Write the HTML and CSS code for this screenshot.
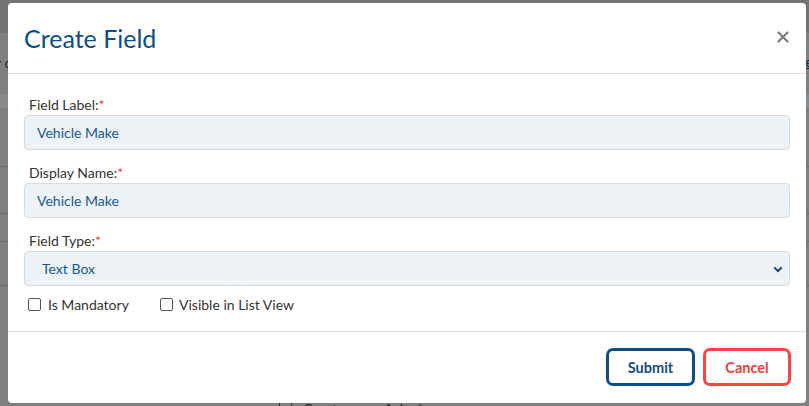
FILE: index.html
```html
<!DOCTYPE html>
<html lang="en">
<head>
<meta charset="utf-8">
<title>Create Field</title>
<link rel="stylesheet" href="styles.css">
</head>
<body>
<div class="backdrop">
  <div class="bg-top"></div>
  <div class="bg-link-left">r c</div>
  <div class="bg-link-right">e</div>
  <div class="bg-band"></div>
  <div class="bg-line l1"></div>
  <div class="bg-line l2"></div>
  <div class="bg-line l3"></div>
  <div class="bg-line l4"></div>
  <div class="bg-bottom"><span class="bg-sep"></span><span class="bg-sep"></span><span class="bg-text">Customer Admin</span></div>
</div>
<div class="modal">
  <div class="modal-header">
    <h1 class="modal-title">Create Field</h1>
    <button class="close" type="button" aria-label="Close">
      <svg width="12" height="12" viewBox="0 0 12 12"><path d="M1.5 1.5L10.5 10.5M10.5 1.5L1.5 10.5" stroke="#7a7a7a" stroke-width="2.2" stroke-linecap="round"/></svg>
    </button>
  </div>
  <div class="modal-body">
    <div class="field">
      <label class="label">Field Label:<span class="req">*</span></label>
      <div class="input">Vehicle Make</div>
    </div>
    <div class="field">
      <label class="label">Display Name:<span class="req">*</span></label>
      <div class="input">Vehicle Make</div>
    </div>
    <div class="field field-last">
      <label class="label">Field Type:<span class="req">*</span></label>
      <div class="input select"><span>Text Box</span>
        <svg width="10" height="7" viewBox="0 0 10 7"><path d="M1.3 1.4L5 5.1L8.7 1.4" fill="none" stroke="#1a3f66" stroke-width="2"/></svg>
      </div>
    </div>
    <div class="checks">
      <label class="check"><span class="box"></span>Is Mandatory</label>
      <label class="check"><span class="box"></span>Visible in List View</label>
    </div>
  </div>
  <div class="modal-footer">
    <button class="btn btn-submit" type="button">Submit</button>
    <button class="btn btn-cancel" type="button">Cancel</button>
  </div>
</div>
</body>
</html>
```

FILE: styles.css
```css
* { box-sizing: border-box; }
html, body { margin: 0; padding: 0; }
body {
  width: 809px;
  height: 406px;
  overflow: hidden;
  background: #7f7f7f;
  font-family: Lato, "Open Sans", sans-serif;
  position: relative;
}
.backdrop { position: absolute; inset: 0; }
.bg-top { position: absolute; left: 0; top: 0; width: 809px; height: 33px; background: #737373; }
.bg-band { position: absolute; left: 0; top: 94px; width: 809px; height: 14px; background: #878a8d; }
.bg-line { position: absolute; left: 0; width: 809px; height: 1px; background: #6c6c6c; }
.l1 { top: 166px; } .l2 { top: 213px; } .l3 { top: 241px; } .l4 { top: 285px; }
.bg-link-left { position: absolute; left: -4px; top: 54px; font-size: 14px; color: #0a2a48; }
.bg-link-right { position: absolute; left: 805px; top: 53px; font-size: 14px; color: #0a2a48; text-decoration: underline; }
.bg-bottom { position: absolute; left: 0; top: 402px; width: 809px; height: 4px; display: flex; padding-left: 279px; gap: 11px; }
.bg-sep { width: 1px; height: 4px; background: #333; }
.bg-text { font-size: 14px; color: #222; line-height: 14px; letter-spacing: 2px; }

.modal {
  position: absolute;
  left: 8px;
  top: 3px;
  width: 798px;
  height: 400px;
  background: #fff;
  border-radius: 4px;
  display: flex;
  flex-direction: column;
}
.modal-header {
  height: 71px;
  border-bottom: 1px solid #dedede;
  display: flex;
  align-items: center;
  justify-content: space-between;
  padding: 0 16px;
}
.modal-title {
  margin: 0;
  font-weight: 400;
  font-size: 25px;
  color: #0c4e89;
}
.close {
  border: 0;
  background: none;
  padding: 0;
  margin-right: 1px;
  margin-top: -2px;
  display: flex;
}
.modal-body {
  padding: 23px 16px 17px;
  border-bottom: 1px solid #dedede;
}
.field { margin-bottom: 15px; }
.field-last { margin-bottom: 0; }
.label {
  display: block;
  font-size: 14px;
  line-height: 16px;
  color: #333;
  padding-left: 5px;
  margin-bottom: 2px;
}
.req { color: #e53935; }
.input {
  height: 35px;
  border: 1px solid #d6dce2;
  border-radius: 4px;
  background: #edf2f7;
  color: #1a5896;
  font-size: 14px;
  display: flex;
  align-items: center;
  padding-left: 12px;
}
.select { padding-left: 17px; padding-right: 6px; justify-content: space-between; }
.select svg { margin-top: 1px; }
.checks {
  display: flex;
  margin-top: 8px;
  height: 20px;
  align-items: center;
  padding-left: 4px;
}
.check {
  display: flex;
  align-items: center;
  font-size: 14px;
  color: #333;
}
.check:first-child { width: 132px; }
.box {
  width: 13px;
  height: 13px;
  border: 1px solid #555;
  border-radius: 2px;
  margin-right: 7px;
  background: #fff;
}
.check:last-child .box { margin-right: 6px; }
.modal-footer {
  flex: 1;
  display: flex;
  justify-content: flex-end;
  align-items: flex-start;
  padding: 16px 15px 0 16px;
  gap: 8px;
}
.btn {
  height: 38px;
  border-radius: 7px;
  background: #fff;
  font-family: Lato, sans-serif;
  font-weight: 700;
  font-size: 14.5px;
  border: 3px solid;
  padding: 0;
}
.btn-submit { width: 89px; color: #0c4e89; border-color: #0c4e89; }
.btn-cancel { width: 88px; color: #f23d3d; border-color: #f94444; }
```
